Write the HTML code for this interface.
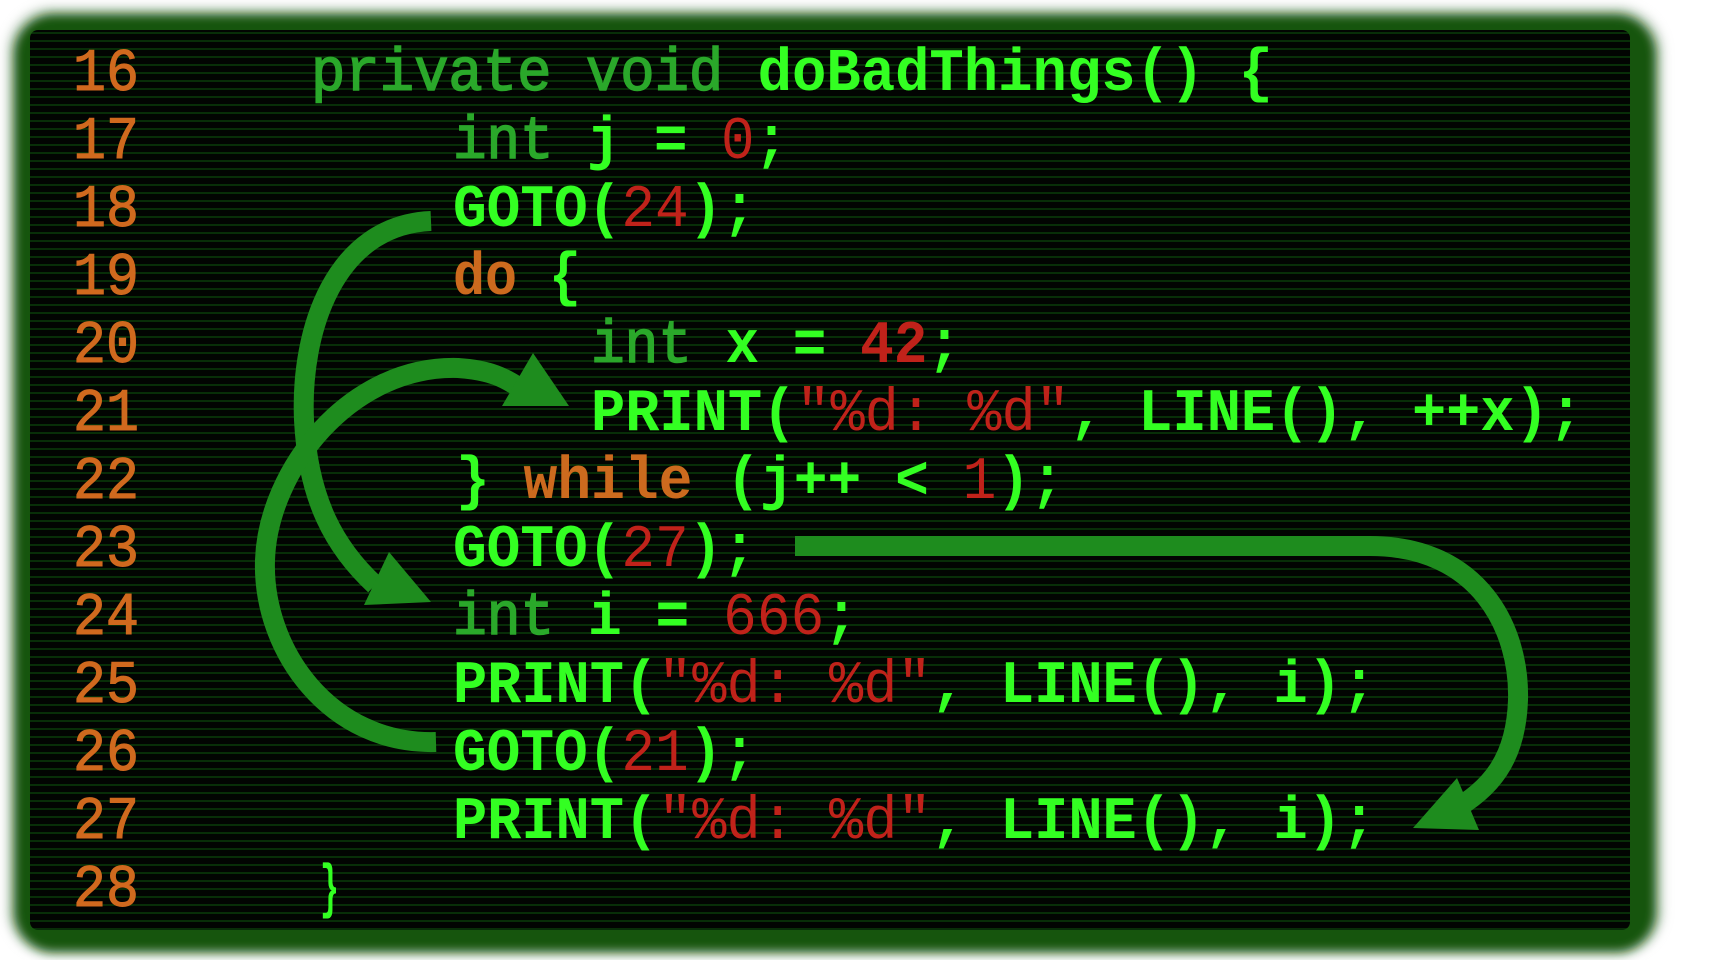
<!DOCTYPE html>
<html><head><meta charset="utf-8"><style>
html,body{margin:0;padding:0;background:#fff;width:1730px;height:960px;overflow:hidden}
svg{display:block}
text{font-family:"Liberation Mono","DejaVu Sans Mono",monospace;font-size:60px}
.n{fill:#d0691e}
.d{fill:#2aa82a}
.b{fill:#33ff22;font-weight:bold}
.r{fill:#c0221a}
.o{fill:#cc6a1e;font-weight:bold}
</style></head><body>
<svg width="1730" height="960" viewBox="0 0 1730 960" xmlns="http://www.w3.org/2000/svg">
<defs>
<filter id="bl" x="-5%" y="-5%" width="110%" height="110%"><feGaussianBlur stdDeviation="5"/></filter>
<pattern id="scan" width="8" height="8" patternUnits="userSpaceOnUse">
<rect width="8" height="8" fill="#020402"/>
<rect y="0" width="8" height="2" fill="#082e08"/>
</pattern>
</defs>
<rect x="6" y="6" width="1658" height="950" rx="46" fill="#b9c9b9" filter="url(#bl)" opacity="0.6"/>
<rect x="14" y="14" width="1642" height="938" rx="40" fill="#135510" filter="url(#bl)"/>
<rect x="30" y="30" width="1600" height="900" rx="8" fill="url(#scan)"/>

<g stroke="#d0691e" stroke-width="1">
<text class="n" x="73" y="90" textLength="66" lengthAdjust="spacingAndGlyphs">16</text>
<text class="n" x="73" y="158" textLength="66" lengthAdjust="spacingAndGlyphs">17</text>
<text class="n" x="73" y="226" textLength="66" lengthAdjust="spacingAndGlyphs">18</text>
<text class="n" x="73" y="294" textLength="66" lengthAdjust="spacingAndGlyphs">19</text>
<text class="n" x="73" y="362" textLength="66" lengthAdjust="spacingAndGlyphs">20</text>
<text class="n" x="73" y="430" textLength="66" lengthAdjust="spacingAndGlyphs">21</text>
<text class="n" x="73" y="498" textLength="66" lengthAdjust="spacingAndGlyphs">22</text>
<text class="n" x="73" y="566" textLength="66" lengthAdjust="spacingAndGlyphs">23</text>
<text class="n" x="73" y="634" textLength="66" lengthAdjust="spacingAndGlyphs">24</text>
<text class="n" x="73" y="702" textLength="66" lengthAdjust="spacingAndGlyphs">25</text>
<text class="n" x="73" y="770" textLength="66" lengthAdjust="spacingAndGlyphs">26</text>
<text class="n" x="73" y="838" textLength="66" lengthAdjust="spacingAndGlyphs">27</text>
<text class="n" x="73" y="906" textLength="66" lengthAdjust="spacingAndGlyphs">28</text>
</g>

<text x="311" y="90" textLength="962" lengthAdjust="spacingAndGlyphs" xml:space="preserve"><tspan class="d" stroke="#2aa82a" stroke-width="1.5">private void </tspan><tspan class="b">doBadThings() {</tspan></text>
<text x="453" y="158" textLength="335" lengthAdjust="spacingAndGlyphs" xml:space="preserve"><tspan class="d" stroke="#2aa82a" stroke-width="1.5">int </tspan><tspan class="b">j = </tspan><tspan class="r">0</tspan><tspan class="b">;</tspan></text>
<text x="453" y="226" textLength="303" lengthAdjust="spacingAndGlyphs"><tspan class="b">GOTO(</tspan><tspan class="r">24</tspan><tspan class="b">);</tspan></text>
<text x="453" y="294" textLength="128" lengthAdjust="spacingAndGlyphs" xml:space="preserve"><tspan class="o">do </tspan><tspan class="b">{</tspan></text>
<text x="591" y="362" textLength="370" lengthAdjust="spacingAndGlyphs" xml:space="preserve"><tspan class="d" stroke="#2aa82a" stroke-width="1.5">int </tspan><tspan class="b">x = </tspan><tspan class="r" font-weight="bold">42</tspan><tspan class="b">;</tspan></text>
<text x="591" y="430" textLength="992" lengthAdjust="spacingAndGlyphs" xml:space="preserve"><tspan class="b">PRINT(</tspan><tspan class="r">"%d: %d"</tspan><tspan class="b">, LINE(), ++x);</tspan></text>
<text x="456" y="498" textLength="608" lengthAdjust="spacingAndGlyphs" xml:space="preserve"><tspan class="b">} </tspan><tspan class="o">while</tspan><tspan class="b"> (j++ &lt; </tspan><tspan class="r">1</tspan><tspan class="b">);</tspan></text>
<text x="453" y="566" textLength="303" lengthAdjust="spacingAndGlyphs"><tspan class="b">GOTO(</tspan><tspan class="r">27</tspan><tspan class="b">);</tspan></text>
<text x="453" y="634" textLength="405" lengthAdjust="spacingAndGlyphs" xml:space="preserve"><tspan class="d" stroke="#2aa82a" stroke-width="1.5">int </tspan><tspan class="b">i = </tspan><tspan class="r">666</tspan><tspan class="b">;</tspan></text>
<text x="453" y="702" textLength="923" lengthAdjust="spacingAndGlyphs" xml:space="preserve"><tspan class="b">PRINT(</tspan><tspan class="r">"%d: %d"</tspan><tspan class="b">, LINE(), i);</tspan></text>
<text x="453" y="770" textLength="303" lengthAdjust="spacingAndGlyphs"><tspan class="b">GOTO(</tspan><tspan class="r">21</tspan><tspan class="b">);</tspan></text>
<text x="453" y="838" textLength="923" lengthAdjust="spacingAndGlyphs" xml:space="preserve"><tspan class="b">PRINT(</tspan><tspan class="r">"%d: %d"</tspan><tspan class="b">, LINE(), i);</tspan></text>
<text x="320" y="906" textLength="19" lengthAdjust="spacingAndGlyphs"><tspan class="b">}</tspan></text>

<g fill="none" stroke="#1e8c1e" stroke-width="20">
<path d="M431,221 C335,225 300,330 304,420 C308,500 335,548 375,585"/>
<path d="M436,742 C330,745 262,650 265,560 C268,470 350,365 458,368 C490,370 505,378 520,388"/>
<path d="M795,546 L1370,546 C1480,546 1520,630 1518,700 C1516,760 1490,790 1450,812"/>
</g>
<g fill="#1e8c1e">
<polygon points="364,605 431,602 389,552"/>
<polygon points="502,406 569,406 533,353"/>
<polygon points="1413,828 1479,830 1457,778"/>
</g>
</svg>
</body></html>
